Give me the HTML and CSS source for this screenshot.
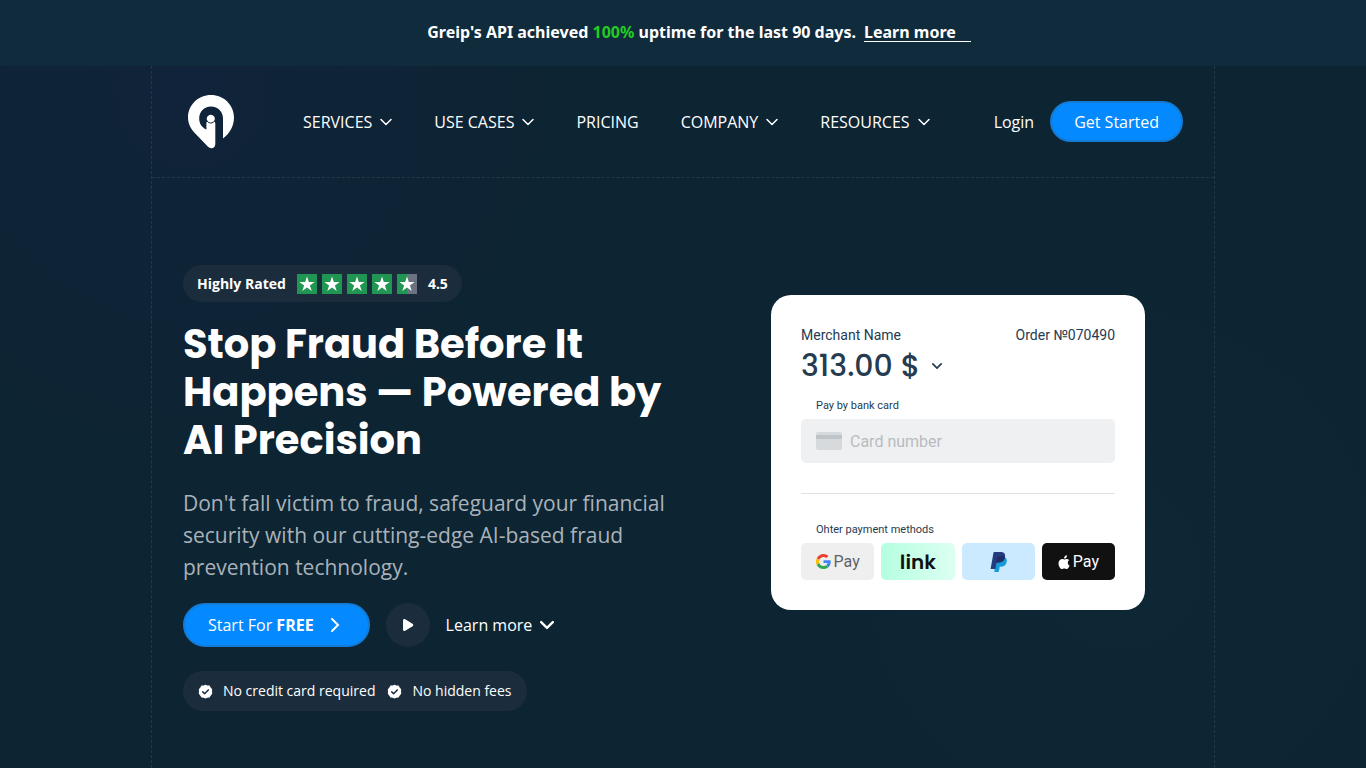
FILE: index.html
```html
<!DOCTYPE html>
<html lang="en">
<head>
  <meta charset="UTF-8" />
  <meta name="viewport" content="width=device-width, initial-scale=1.0" />
  <title>Greip - Stop Fraud Before It Happens</title>
  <link rel="stylesheet" href="styles.css">
</head>
<body>

  <!-- Shared icons -->
  <svg class="sprite" aria-hidden="true">
    <symbol id="chevron" viewBox="0 0 12 8"><path d="m1 1.500 5 5 5-5" /></symbol>
    <symbol id="star" viewBox="0 0 20 20"><path d="M10 2.500 11.800 8H17.600L12.900 11.400 14.700 17 10 13.500 5.300 17 7.100 11.400 2.400 8H8.200Z" /></symbol>
    <symbol id="check" viewBox="0 0 16 16">
      <path fill="#fff" d="M8 .8 10 1.500 12.300 1.700 13.500 3.600 15.100 5.500 15 8 15.100 10.500 13.500 12.400 12.200 14.300 10 14.600 8 15.400 6 14.600 3.800 14.300 2.500 12.400.9 10.500 1 8 .9 5.500 2.500 3.600 3.700 1.700 6 1.500Z" />
      <path fill="none" stroke="#1b2d3d" stroke-width="1.600" stroke-linecap="round" stroke-linejoin="round" d="m5 8.300 2 2 4-4" />
    </symbol>
  </svg>

  <!-- Announcement -->
  <div class="banner">
    <p>Greip's API achieved <span class="uptime">100%</span> uptime for the last 90 days.</p>
    <a href="#">Learn more</a>
  </div>

  <div class="container">
    <!-- Header -->
    <header class="header">
      <a href="#" class="logo" aria-label="Greip">
        <svg width="46" height="54" viewBox="0 0 46 54">
          <path fill="#fff" d="M23 0C10.300 0 0 10 0 22.500c0 7.200 3.600 12.500 8.200 17L20 51.800c2.600 2.600 7.300 1.400 7.300-2.600V28.500c0-1.300-.6-2-1.300-2.500a3.900 3.900 0 1 0-6.400 0c-.8.500-1.200 1.300-1.200 2.500v6C13.500 32.500 11.200 28 11.200 23.500 11.200 16.500 16 11.500 23 11.500S35 16.500 35 23.500V43.500C41.500 38.800 46 31 46 22.500 46 10 35.700 0 23 0Z" />
          <path fill="none" stroke="#11243a" stroke-width="1" d="M18.900 25.600a4.300 4.300 0 0 0 7.800 0" />
        </svg>
      </a>
      <nav class="nav">
        <a href="#">SERVICES <svg class="chevron"><use href="#chevron" /></svg></a>
        <a href="#">USE CASES <svg class="chevron"><use href="#chevron" /></svg></a>
        <a href="#">PRICING</a>
        <a href="#">COMPANY <svg class="chevron"><use href="#chevron" /></svg></a>
        <a href="#">RESOURCES <svg class="chevron"><use href="#chevron" /></svg></a>
      </nav>
      <div class="account">
        <a href="#">Login</a>
        <a href="#" class="btn btn-small">Get Started</a>
      </div>
    </header>

    <!-- Hero -->
    <main class="hero">
      <section class="intro">
        <div class="rating">
          <span>Highly Rated</span>
          <span class="stars">
            <svg class="star"><use href="#star" /></svg>
            <svg class="star"><use href="#star" /></svg>
            <svg class="star"><use href="#star" /></svg>
            <svg class="star"><use href="#star" /></svg>
            <svg class="star star-half"><use href="#star" /></svg>
          </span>
          <span>4.5</span>
        </div>
        <h1>Stop Fraud Before It Happens — Powered by AI Precision</h1>
        <p class="lead">Don't fall victim to fraud, safeguard your financial security with our cutting-edge AI-based fraud prevention technology.</p>
        <div class="actions">
          <a href="#" class="btn btn-start">
            <span>Start For <b>FREE</b></span>
            <svg class="arrow" width="10" height="16" viewBox="0 0 10 16"><path d="m2 2 6 6-6 6" /></svg>
          </a>
          <button class="play" aria-label="Play video">
            <svg width="12" height="14" viewBox="0 0 12 14"><path fill="#fff" d="M1 2.500C1 1.200 2 .6 3.200 1.200l7.300 4.500c1 .7 1 1.900 0 2.600l-7.300 4.500C2 13.400 1 12.800 1 11.500Z" /></svg>
          </button>
          <a href="#" class="more">Learn more <svg class="chevron"><use href="#chevron" /></svg></a>
        </div>
        <ul class="perks">
          <li><svg class="check"><use href="#check" /></svg>No credit card required</li>
          <li><svg class="check"><use href="#check" /></svg>No hidden fees</li>
        </ul>
      </section>

      <!-- Checkout card -->
      <section class="checkout">
        <div class="order">
          <span>Merchant Name</span>
          <span>Order №070490</span>
        </div>
        <div class="amount">313.00 $ <svg class="chevron"><use href="#chevron" /></svg></div>
        <label class="caption" for="card">Pay by bank card</label>
        <div class="field">
          <svg width="26" height="18" viewBox="0 0 26 18"><rect width="26" height="18" rx="2" fill="#d6dadd" /><path fill="#bfc4c9" d="M0 3h26v4H0z" /></svg>
          <input type="text" id="card" placeholder="Card number">
        </div>
        <hr>
        <div class="caption">Ohter payment methods</div>
        <div class="methods">
          <button class="method google" aria-label="Google Pay">
            <svg width="15" height="15" viewBox="0 0 48 48">
              <path fill="#ea4335" d="M24 9.500c3.500 0 6.700 1.200 9.200 3.600l6.900-6.900C35.900 2.400 30.500 0 24 0 14.600 0 6.500 5.400 2.600 13.200l8 6.200C12.400 13.700 17.700 9.500 24 9.500Z" />
              <path fill="#4285f4" d="M47 24.500c0-1.600-.2-3.100-.4-4.500H24v9h12.900c-.6 3-2.200 5.500-4.700 7.200l7.700 6C44.400 38 47 31.800 47 24.500Z" />
              <path fill="#fbbc05" d="M10.500 28.600a14.500 14.500 0 0 1 0-9.200l-8-6.200a24 24 0 0 0 0 21.600Z" />
              <path fill="#34a853" d="M24 48c6.500 0 11.900-2.100 15.900-5.800l-7.700-6c-2.200 1.500-4.900 2.300-8.200 2.300-6.300 0-11.600-4.200-13.500-9.900l-8 6.200C6.500 42.600 14.600 48 24 48Z" />
            </svg>
            <span>Pay</span>
          </button>
          <button class="method link"><span>link</span></button>
          <button class="method paypal" aria-label="PayPal">
            <svg width="17" height="20" viewBox="0 0 17 20">
              <path fill="#179bd7" d="M6 5h8.600c2 1.200 2.600 3 2 5.200-.7 3.200-3 4.600-6 4.600h-.9L9 19c-.1.600-.4.900-1 .9H4.300Z" />
              <path fill="#253b80" d="M3.500.6C3.600.2 3.900 0 4.300 0h6c3.700 0 5.400 1.900 4.700 5.200-.8 3.700-3.300 5.300-6.700 5.300H6.600L5.400 17H.6Z" />
              <path fill="#222d65" d="M6.900 5.300c.1-.5.400-.7.900-.7h4.700c1 0 1.800.1 2.500.5-.8 3.800-3.300 5.400-6.700 5.400H6.100Z" />
            </svg>
          </button>
          <button class="method apple" aria-label="Apple Pay">
            <svg width="12" height="14" viewBox="0 0 24 28"><path fill="#fff" d="M19.600 14.800c0-3 2.500-4.400 2.600-4.500-1.400-2.100-3.600-2.400-4.400-2.400-1.900-.2-3.700 1.100-4.600 1.100-1 0-2.400-1.100-4-1.100C4.600 8 1 11.300 1 16.800 1 21.800 4.600 28 7.800 28c1.700 0 2.500-1.200 4.800-1.200s2.900 1.200 4.700 1.200c2.700 0 5.200-4.400 5.700-7.200-.1 0-3.400-1.300-3.400-6ZM16.200 5.900C17.500 4.300 18 2.400 17.900.5c-3.300.3-6 3.200-5.700 6.600 1.500.1 3-.5 4-1.200Z" /></svg>
            <span>Pay</span>
          </button>
        </div>
      </section>
    </main>
  </div>

</body>
</html>
```
FILE: styles.css
```css
* {
  margin: 0;
  padding: 0;
  box-sizing: border-box;
}

body {
  min-height: 100vh;
  display: flex;
  flex-direction: column;
  background:
    radial-gradient(circle at 14% 12%, #10233a 0, transparent 360px),
    radial-gradient(circle at 82% 74%, #0e2735 0, transparent 340px),
    #0d2433;
  color: #fff;
  font-family: "Open Sans", "Noto Sans", sans-serif;
  font-size: 16px;
  line-height: 24px;
}

a {
  color: inherit;
  text-decoration: none;
}

button {
  border: none;
  font: inherit;
  cursor: pointer;
}

.sprite {
  position: absolute;
  width: 0;
  height: 0;
}

.chevron {
  width: 12px;
  height: 8px;
  fill: none;
  stroke: currentColor;
  stroke-width: 1.5;
  stroke-linecap: round;
  stroke-linejoin: round;
}

/* Announcement */
.banner {
  display: flex;
  justify-content: center;
  gap: 8px;
  min-height: 66px;
  padding: 20px 0 20px 32px;
  background: #102b3c;
  font-family: "Noto Sans", sans-serif;
  font-weight: 700;
}

.banner a {
  height: 22px;
  padding-right: 15px;
  border-bottom: 1px solid #fff;
}

.uptime {
  color: #22cc22;
}

.container {
  flex: 1;
  width: 100%;
  max-width: 1064px;
  margin: 0 auto;
  border: dashed #223947;
  border-width: 0 1px;
}

/* Header */
.header {
  display: flex;
  align-items: center;
  height: 112px;
  padding: 0 31px;
  border-bottom: 1px dashed #223947;
}

.logo {
  display: flex;
  padding: 0 5px;
}

.nav {
  display: flex;
  gap: 42px;
  margin-left: 64px;
}

.nav a,
.more {
  display: flex;
  align-items: center;
  gap: 8px;
}

.account {
  display: flex;
  align-items: center;
  gap: 16px;
  margin-left: auto;
}

.btn {
  display: flex;
  align-items: center;
  border: 2px solid #157ad2;
  border-radius: 22px;
  background: #0489ff;
}

.btn-small {
  height: 41px;
  padding: 0 22px;
}

/* Hero */
.hero {
  display: flex;
  justify-content: space-between;
  align-items: flex-start;
  padding: 87px 69px 56px 31px;
}

.intro {
  width: 500px;
}

.rating {
  display: flex;
  align-items: center;
  gap: 11px;
  width: fit-content;
  height: 37px;
  padding: 0 14px;
  border-radius: 19px;
  background: #1b2d3d;
  font-size: 14px;
  font-weight: 700;
}

.stars {
  display: flex;
  gap: 5px;
}

.star {
  width: 20px;
  height: 20px;
  background: #219653;
  fill: #fff;
}

.star-half {
  background: linear-gradient(90deg, #219653 50%, #6b7280 50%);
}

h1 {
  margin-top: 18px;
  font-family: Poppins, Inter, sans-serif;
  font-size: 40px;
  font-weight: 700;
  line-height: 48px;
}

.lead {
  margin-top: 23px;
  color: #a9b2b9;
  font-size: 21px;
  line-height: 32px;
}

.actions {
  display: flex;
  align-items: center;
  gap: 16px;
  margin-top: 20px;
}

.btn-start {
  gap: 16px;
  height: 44px;
  padding: 0 28px 0 23px;
}

.arrow {
  fill: none;
  stroke: #fff;
  stroke-width: 2;
  stroke-linecap: round;
}

.play {
  display: flex;
  align-items: center;
  justify-content: center;
  width: 44px;
  height: 44px;
  border-radius: 50%;
  background: #1b2d3d;
}

.more .chevron {
  width: 14px;
  height: 10px;
  stroke-width: 2;
}

.perks {
  display: flex;
  align-items: center;
  gap: 12px;
  width: fit-content;
  height: 40px;
  margin-top: 24px;
  padding: 0 15px;
  border-radius: 20px;
  background: #1b2d3d;
  font-size: 14px;
  list-style: none;
}

.perks li {
  display: flex;
  align-items: center;
  gap: 10px;
}

.check {
  width: 15px;
  height: 15px;
}

/* Checkout card */
.checkout {
  width: 374px;
  margin-top: 30px;
  padding: 30px;
  border-radius: 20px;
  background: #fff;
  color: #263b50;
  font-family: Roboto, sans-serif;
}

.order {
  display: flex;
  justify-content: space-between;
  font-size: 14px;
  line-height: 20px;
}

.amount {
  display: flex;
  align-items: center;
  gap: 12px;
  font-family: Poppins, Inter, sans-serif;
  font-size: 30px;
  font-weight: 500;
  line-height: 42px;
}

.amount .chevron {
  width: 10px;
  stroke-width: 2;
}

.caption {
  display: block;
  padding-left: 15px;
  font-size: 11px;
  line-height: 16px;
}

.amount + .caption {
  margin-top: 11px;
}

.field {
  display: flex;
  align-items: center;
  gap: 8px;
  height: 44px;
  margin-top: 5px;
  padding: 0 15px;
  border-radius: 5px;
  background: #eff0f2;
}

.field input {
  flex: 1;
  min-width: 0;
  border: none;
  outline: none;
  background: none;
  color: inherit;
  font-family: inherit;
  font-size: 16px;
}

.field input::placeholder {
  color: #b7bcc1;
}

hr {
  margin: 30px 0 28px;
  border: none;
  border-top: 1px solid #dfe3e6;
}

.methods {
  display: grid;
  grid-template-columns: repeat(4, 1fr);
  gap: 7px;
  margin-top: 5px;
}

.method {
  display: flex;
  align-items: center;
  justify-content: center;
  gap: 3px;
  height: 37px;
  border-radius: 5px;
}

.google {
  background: #efefef;
  color: #5f6368;
}

.link {
  background: linear-gradient(90deg, #b5ffe0, #dcfff2);
  color: #111;
  font-family: Poppins, Lato, sans-serif;
  font-size: 20px;
  font-weight: 600;
}

.paypal {
  background: #cceaff;
}

.apple {
  background: #111;
  color: #fff;
}
```
